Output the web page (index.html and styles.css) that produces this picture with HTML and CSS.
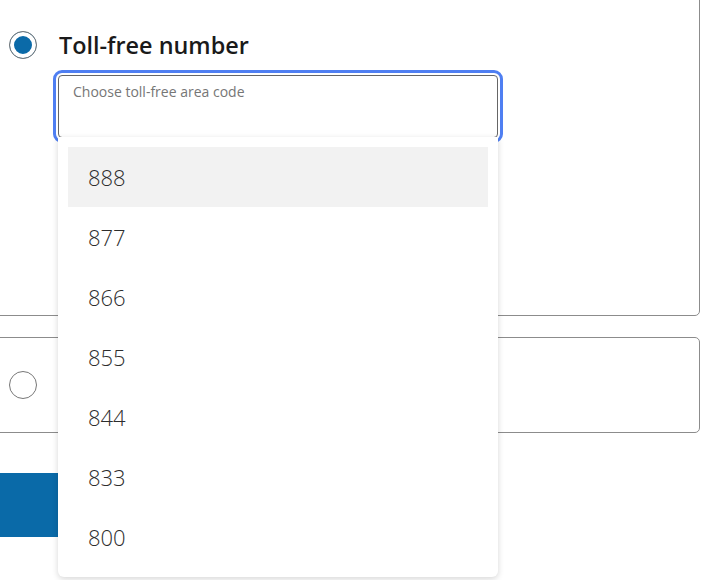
FILE: index.html
```html
<!DOCTYPE html>
<html lang="en">
<head>
    <meta charset="UTF-8">
    <meta name="viewport" content="width=device-width, initial-scale=1.0">
    <title>Choose a number</title>
    <link rel="stylesheet" href="styles.css">
</head>
<body>
    <div class="options">
        <div class="card card-open">
            <label class="choice">
                <span class="radio radio-checked"></span>
                <span class="choice-title">Toll-free number</span>
            </label>

            <div class="select">
                <div class="select-field">
                    <span class="select-label">Choose toll-free area code</span>
                </div>
                <ul class="menu">
                    <li class="menu-item menu-item-active">888</li>
                    <li class="menu-item">877</li>
                    <li class="menu-item">866</li>
                    <li class="menu-item">855</li>
                    <li class="menu-item">844</li>
                    <li class="menu-item">833</li>
                    <li class="menu-item">800</li>
                </ul>
            </div>
        </div>

        <div class="card card-closed">
            <label class="choice" aria-label="Local number">
                <span class="radio"></span>
            </label>
        </div>

        <button class="btn-continue">Continue</button>
    </div>
</body>
</html>
```

FILE: styles.css
```css
* {
    margin: 0;
    padding: 0;
    box-sizing: border-box;
}

body {
    font-family: "Open Sans", "Liberation Sans", sans-serif;
    background-color: #fff;
    color: #1a1a1a;
    min-height: 100vh;
    padding-bottom: 60px;
}

.options {
    width: 710px;
    margin: -10px 0 0 -10px;
}

.card {
    border: 1px solid #8c8c8c;
    border-radius: 5px;
    padding: 0 0 0 18px;
}

.card-open {
    height: 326px;
    padding-top: 40px;
}

.card-closed {
    height: 96px;
    margin-top: 21px;
    display: flex;
    align-items: center;
}

.choice {
    display: flex;
    align-items: center;
    gap: 22px;
}

.radio {
    width: 28px;
    height: 28px;
    border: 1px solid #777;
    border-radius: 50%;
    background-color: #fff;
    flex-shrink: 0;
}

.radio-checked {
    background-color: #0b6aa8;
    box-shadow: inset 0 0 0 4px #fff;
}

.choice-title {
    font-size: 23.4px;
    line-height: 28px;
    font-weight: 600;
    color: #1a1a1a;
}

.select {
    position: relative;
    width: 440px;
    margin: 16px 0 0 49px;
}

.select-field {
    height: 63px;
    border: 1px solid #666;
    border-radius: 4px;
    outline: 3px solid #4f7ff2;
    outline-offset: 2px;
    padding: 4px 14px;
}

.select-label {
    font-size: 14px;
    line-height: 18px;
    color: #767676;
}

.menu {
    position: absolute;
    top: 62px;
    left: 0;
    width: 440px;
    list-style: none;
    background-color: #fff;
    padding: 10px;
    border-radius: 0 0 6px 6px;
    box-shadow: 0 2px 6px rgba(0, 0, 0, 0.16);
    z-index: 10;
}

.menu-item {
    height: 60px;
    line-height: 60px;
    padding-left: 20px;
    font-size: 22px;
    font-weight: 300;
    color: #2d2d2d;
}

.menu-item-active {
    background-color: #f2f2f2;
}

.btn-continue {
    display: block;
    width: 220px;
    height: 64px;
    margin-top: 40px;
    border: none;
    background-color: #0a6aa8;
    color: #fff;
    font-family: inherit;
    font-size: 20px;
    font-weight: 500;
}
```
